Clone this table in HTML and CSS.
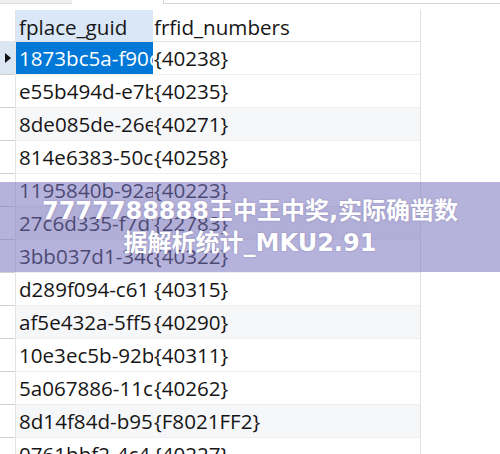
FILE: index.html
```html
<!DOCTYPE html>
<html>
<head>
<meta charset="utf-8">
<link rel="stylesheet" href="styles.css">
</head>
<body>
<div class="topbar">
  <div class="tab-left"></div>
  <div class="tab-gap"></div>
  <div class="tab-right"></div>
</div>
<div class="grid">
  <div class="rh head"></div>
  <div class="cell head sel-col">fplace_guid</div>
  <div class="cell head c2">frfid_numbers</div>

  <div class="rh cur"><span class="tri"></span></div>
  <div class="cell sel">1873bc5a-f90d</div>
  <div class="cell c2">{40238}</div>

  <div class="rh"></div>
  <div class="cell">e55b494d-e7bc</div>
  <div class="cell c2">{40235}</div>

  <div class="rh"></div>
  <div class="cell alt">8de085de-26ee</div>
  <div class="cell c2 alt">{40271}</div>

  <div class="rh"></div>
  <div class="cell">814e6383-50cd</div>
  <div class="cell c2">{40258}</div>

  <div class="rh"></div>
  <div class="cell">1195840b-92ae</div>
  <div class="cell c2">{40223}</div>

  <div class="rh"></div>
  <div class="cell alt">27c6d335-f7d1</div>
  <div class="cell c2 alt">{22783}</div>

  <div class="rh"></div>
  <div class="cell">3bb037d1-34c8</div>
  <div class="cell c2">{40322}</div>

  <div class="rh"></div>
  <div class="cell">d289f094-c61</div>
  <div class="cell c2">{40315}</div>

  <div class="rh"></div>
  <div class="cell alt">af5e432a-5ff5</div>
  <div class="cell c2 alt">{40290}</div>

  <div class="rh"></div>
  <div class="cell">10e3ec5b-92bc</div>
  <div class="cell c2">{40311}</div>

  <div class="rh"></div>
  <div class="cell">5a067886-11cc</div>
  <div class="cell c2">{40262}</div>

  <div class="rh"></div>
  <div class="cell alt">8d14f84d-b95</div>
  <div class="cell c2 alt">{F8021FF2}</div>

  <div class="rh"></div>
  <div class="cell">0761bbf2-4c4</div>
  <div class="cell c2">{40227}</div>
</div>
<div class="banner">
  <div class="banner-text">7777788888王中王中奖,实际确凿数<br>据解析统计_MKU2.91</div>
</div>
</body>
</html>
```
FILE: styles.css
```css
html, body {
  margin: 0;
  padding: 0;
  background: #ffffff;
  overflow: hidden;
}
body {
  width: 500px;
  height: 454px;
  position: relative;
  font-family: "Open Sans", "Noto Sans", sans-serif;
}
.topbar {
  display: flex;
  height: 4px;
}
.tab-left {
  width: 72px;
  background: #f0f0f0;
  border-bottom: 1px solid #dcdcdc;
  box-sizing: border-box;
}
.tab-gap {
  width: 91px;
}
.tab-right {
  flex: 1;
  border-left: 1px solid #d6d6d6;
  border-bottom: 1px solid #d6d6d6;
  box-sizing: border-box;
}
.grid {
  margin-top: 6px;
  display: grid;
  grid-template-columns: 15px 138px 268px;
  grid-template-rows: 32px repeat(13, 33px);
}
.rh {
  border-bottom: 1px solid #cfcfcf;
  box-sizing: border-box;
  display: flex;
  align-items: center;
  justify-content: center;
}
.rh.head {
  border-bottom: 1px solid #e6e6e6;
}
.rh.cur {
  background: #dbe6f3;
}
.tri {
  width: 0;
  height: 0;
  border-top: 5px solid transparent;
  border-bottom: 5px solid transparent;
  border-left: 6px solid #111;
  margin-left: 1px;
}
.cell {
  box-sizing: border-box;
  font-size: 20.6px;
  line-height: 32px;
  color: #161616;
  white-space: nowrap;
  overflow: hidden;
  padding-left: 3px;
  border-left: 1px solid #e4e4e4;
  border-bottom: 1px solid #efefef;
}
.cell.c2 {
  padding-left: 1px;
  border-left: none;
  border-right: 1px solid #e0e0e0;
}
.cell.head {
  border-bottom: 1px solid #e2e2e2;
  line-height: 31px;
  padding-top: 2px;
}
.cell.sel-col {
  background: #d9e7f7;
}
.cell.sel {
  background: #0078d7;
  color: #ffffff;
}
.cell.alt {
  background: #f6f7f9;
}
.banner {
  position: absolute;
  left: 0;
  top: 182px;
  width: 500px;
  height: 90px;
  background: rgba(120, 115, 190, 0.55);
  display: flex;
  align-items: center;
  justify-content: center;
}
.banner-text {
  font-family: "DejaVu Sans", "Noto Sans CJK SC", sans-serif;
  font-weight: bold;
  font-size: 24px;
  line-height: 32px;
  color: #ffffff;
  text-align: center;
  text-shadow: 0 0 2px rgba(60, 55, 110, 0.35);
}
```
